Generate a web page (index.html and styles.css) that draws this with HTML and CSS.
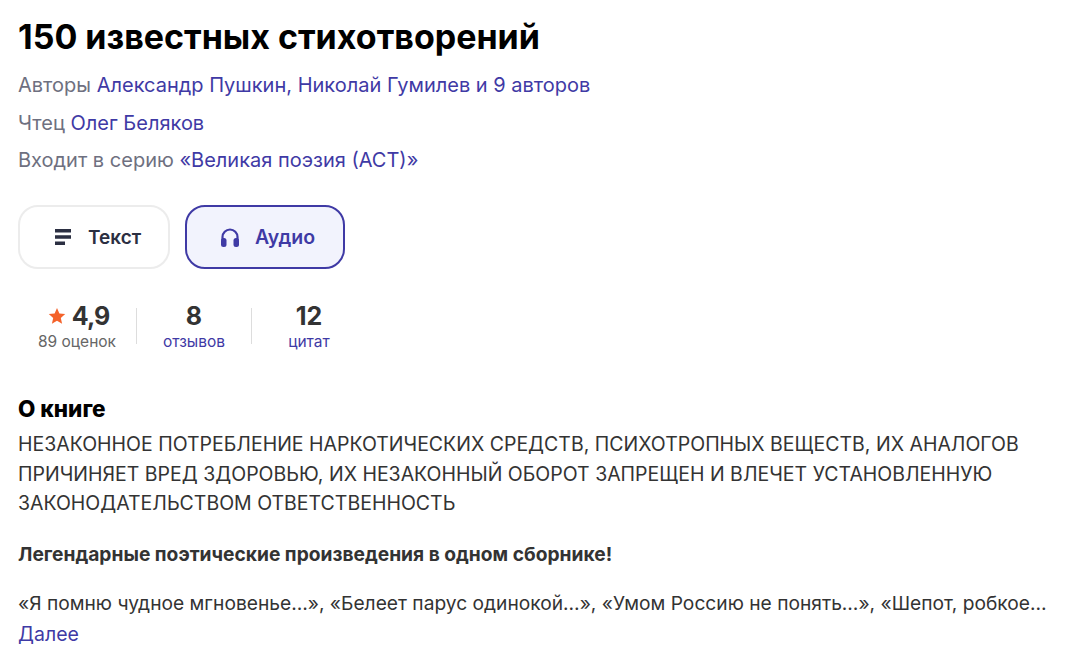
FILE: index.html
```html
<!DOCTYPE html>
<html>
<head>
	<meta charset="UTF-8">
	<title>150 известных стихотворений</title>
	<link rel="stylesheet" href="styles.css">
</head>

<body>

<div class="book">
	<h1 class="title">150 известных стихотворений</h1>
	<p class="meta">Авторы <a href="#">Александр Пушкин</a><a href="#">, Николай Гумилев</a> <a href="#">и 9 авторов</a></p>
	<p class="meta">Чтец <a href="#">Олег Беляков</a></p>
	<p class="meta">Входит в серию <a href="#">«Великая поэзия (АСТ)»</a></p>

	<div class="tabs">
		<a class="tab" href="#">
			<svg width="16" height="16" viewBox="0 0 16 16"><path d="M0 0h16v3.500H0zM0 6.300h16v3.500H0zM0 12.500h10V16H0z" fill="#2b2f42"/></svg>
			<span>Текст</span>
		</a>
		<a class="tab active" href="#">
			<svg width="18" height="19" viewBox="0 0 18 19"><path d="M1.500 12V9a7.500 7.500 0 0 1 15 0v3" fill="none" stroke="#3f3aa5" stroke-width="2.200"/><rect x="0" y="10" width="5.500" height="9" rx="2.500" fill="#3f3aa5"/><rect x="12.500" y="10" width="5.500" height="9" rx="2.500" fill="#3f3aa5"/></svg>
			<span>Аудио</span>
		</a>
	</div>

	<div class="stats">
		<div class="stat">
			<div class="num rating"><svg class="star" width="18" height="18" viewBox="0 0 18 18"><path d="M9 1l2.400 5.400 5.800.6-4.400 3.900 1.300 5.800L9 13.700l-5.100 3 1.300-5.800L.800 7l5.800-.6z" fill="#f4622a"/></svg>4,9</div>
			<div class="label">89 оценок</div>
		</div>
		<div class="stat">
			<div class="num">8</div>
			<a class="label link" href="#">отзывов</a>
		</div>
		<div class="stat">
			<div class="num">12</div>
			<a class="label link" href="#">цитат</a>
		</div>
	</div>

	<h2 class="about">О книге</h2>
	<p class="text">НЕЗАКОННОЕ ПОТРЕБЛЕНИЕ НАРКОТИЧЕСКИХ СРЕДСТВ, ПСИХОТРОПНЫХ ВЕЩЕСТВ, ИХ АНАЛОГОВ<br>ПРИЧИНЯЕТ ВРЕД ЗДОРОВЬЮ, ИХ НЕЗАКОННЫЙ ОБОРОТ ЗАПРЕЩЕН И ВЛЕЧЕТ УСТАНОВЛЕННУЮ<br>ЗАКОНОДАТЕЛЬСТВОМ ОТВЕТСТВЕННОСТЬ</p>
	<p class="text lead">Легендарные поэтические произведения в одном сборнике!</p>
	<p class="text clip">«Я помню чудное мгновенье…», «Белеет парус одинокой…», «Умом Россию не понять…», «Шепот, робкое…</p>
	<a class="more" href="#">Далее</a>
</div>

</body>
</html>
```

FILE: styles.css
```css
*{ margin: 0; padding: 0; box-sizing: border-box;}
body{ background: #fff; font-family: "Inter", "Noto Sans", sans-serif; color: #333;}
a{ color: #3f3aa5; text-decoration: none;}

.book{ padding: 14px 0 0 18px; width: 1060px;}
.title{ font-size: 34px; line-height: 46px; font-weight: 700; color: #000; margin-bottom: 10px;}
.meta{ font-size: 20px; line-height: 30px; color: #6e7080; margin-bottom: 7.500px;}

.tabs{ display: flex; gap: 15px; margin-top: 30px;}
.tab{ display: flex; align-items: center; height: 64px; padding-left: 35px; font-size: 19.500px; font-weight: 600; color: #2b2f42; border: 2px solid #ececec; border-radius: 20px;}
.tab:first-child{ width: 152px; gap: 17px; font-size: 19px;}
.tab.active{ width: 160px; gap: 16px; padding-left: 34px; color: #3f3aa5; background: #f2f3fd; border-color: #3f3aa5;}

.stats{ display: flex; margin-top: 39px;}
.stat{ width: 115px; height: 36px; text-align: center; border-left: 1px solid #ddd;}
.stat:first-child{ width: 118px; border-left: none;}
.num{ font-size: 25px; line-height: 28px; font-weight: 700; color: #333; margin-top: -6px; display: flex; justify-content: center; align-items: center;}
.rating{ letter-spacing: -1px; padding-left: 3px;}
.star{ margin-right: 6px;}
.label{ display: block; font-size: 15.500px; line-height: 20px; color: #666; margin-top: 2px;}
.label.link{ color: #3f3aa5;}

.about{ font-size: 22.500px; line-height: 28px; font-weight: 800; color: #000; margin-top: 51px;}
.text{ font-size: 19.500px; line-height: 29.600px; color: #333; margin-top: 7px;}
.lead{ font-size: 19.200px; font-weight: 700; margin-top: 21px;}
.clip{ font-size: 19.200px; margin-top: 20px; white-space: nowrap;}
.more{ display: block; font-size: 19.500px; line-height: 30px;}
```
